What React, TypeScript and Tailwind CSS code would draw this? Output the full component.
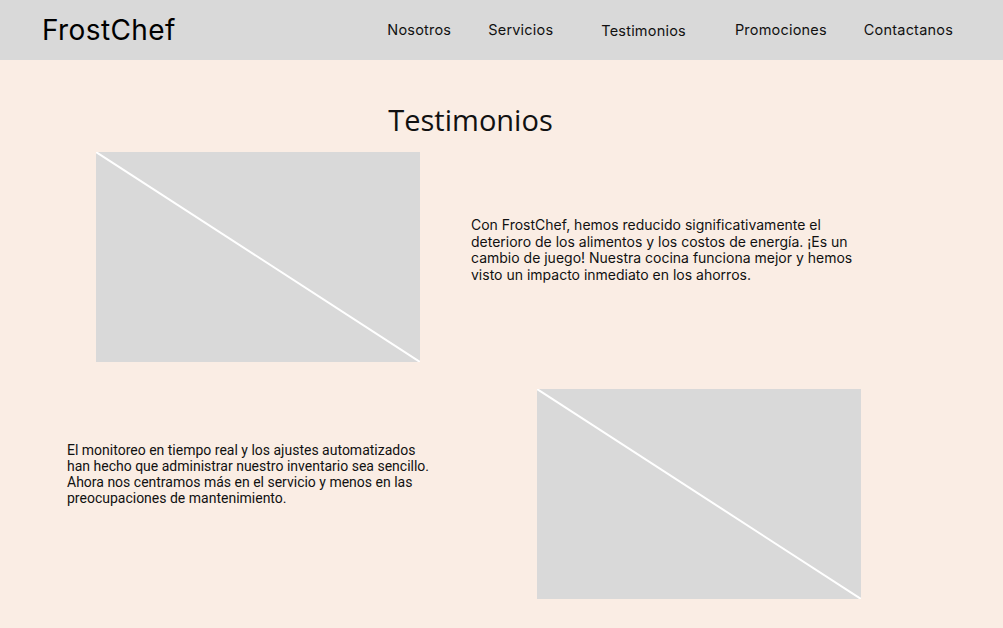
const navItems = [
  { label: 'Nosotros', className: 'ml-0' },
  { label: 'Servicios', className: 'ml-[37px]' },
  { label: 'Testimonios', className: 'ml-[48px] mt-[2px]' },
  { label: 'Promociones', className: 'ml-[49px]' },
  { label: 'Contactanos', className: 'ml-[37px]' },
]

function Placeholder() {
  return (
    <div className="relative w-[324px] h-[210px] bg-[#d9d9d9] shrink-0">
      <svg className="absolute inset-0 w-full h-full" viewBox="0 0 324 210" preserveAspectRatio="none">
        <line x1="0" y1="0" x2="324" y2="210" stroke="#ffffff" strokeWidth="2" />
      </svg>
    </div>
  )
}

export default function App() {
  return (
    <div className="w-[1003px] h-[628px] bg-[#faede4] overflow-hidden">
      {/* Header */}
      <header className="h-[60px] bg-[#d9d9d9] flex items-center">
        <div className="ml-[42px] text-[28px] text-black tracking-[0.4px]" style={{ fontFamily: 'Inter, sans-serif' }}>
          FrostChef
        </div>
        <nav
          className="ml-auto mr-[50px] flex items-center text-[14.5px] text-[#111] tracking-[0.2px]"
          style={{ fontFamily: 'Inter, sans-serif' }}
        >
          {navItems.map((item) => (
            <a key={item.label} className={item.className}>
              {item.label}
            </a>
          ))}
        </nav>
      </header>

      {/* Testimonios */}
      <main className="flex flex-col">
        <h1
          className="mt-[42px] text-[29px] leading-[36px] text-[#111] text-center pr-[62px]"
          style={{ fontFamily: '"Open Sans", sans-serif' }}
        >
          Testimonios
        </h1>

        <div className="mt-[14px] flex items-center">
          <div className="ml-[96px]">
            <Placeholder />
          </div>
          <p
            className="ml-[51px] w-[390px] text-[14px] leading-[16.5px] text-[#111] -mt-[14px]"
            style={{ fontFamily: 'Inter, sans-serif' }}
          >
            Con FrostChef, hemos reducido significativamente el deterioro de los alimentos y los costos de energía. ¡Es un
            cambio de juego! Nuestra cocina funciona mejor y hemos visto un impacto inmediato en los ahorros.
          </p>
        </div>

        <div className="mt-[27px] flex">
          <p
            className="ml-[67px] mt-[53px] w-[370px] text-[14px] leading-[16px] text-[#111]"
            style={{ fontFamily: 'Roboto, sans-serif' }}
          >
            El monitoreo en tiempo real y los ajustes automatizados han hecho que administrar nuestro inventario sea
            sencillo. Ahora nos centramos más en el servicio y menos en las preocupaciones de mantenimiento.
          </p>
          <div className="ml-auto mr-[142px]">
            <Placeholder />
          </div>
        </div>
      </main>
    </div>
  )
}
